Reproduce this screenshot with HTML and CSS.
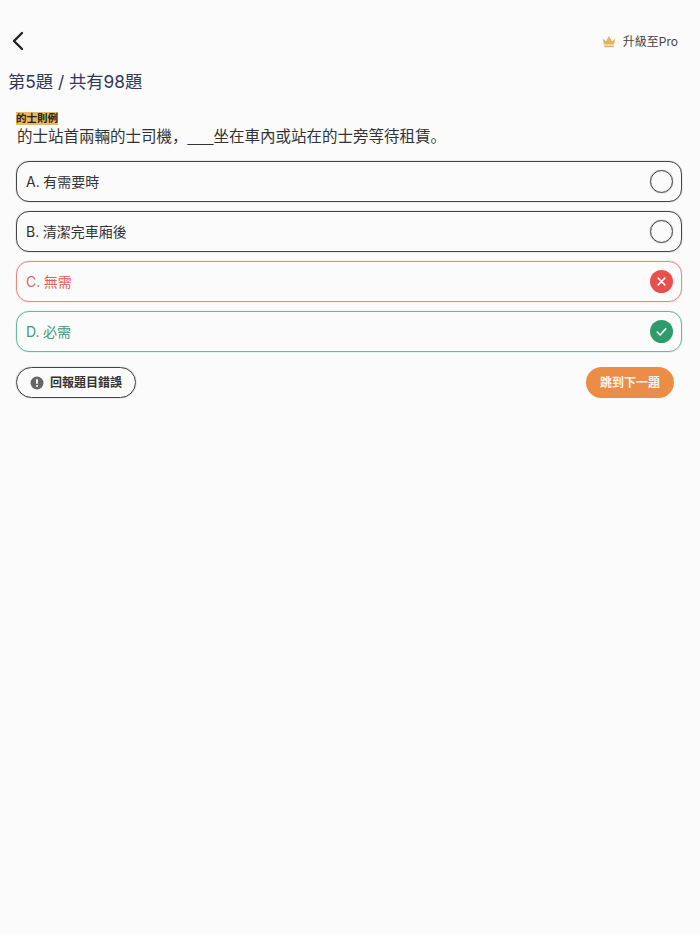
FILE: index.html
```html
<!DOCTYPE html>
<html lang="zh-Hant">
<head>
<meta charset="utf-8">
<title>Quiz</title>
<link rel="stylesheet" href="styles.css">
</head>
<body>
<header class="topbar">
  <svg class="back" width="24" height="24" viewBox="0 0 24 24"><path d="M16 4 L8 12 L16 20" fill="none" stroke="#222" stroke-width="2.4" stroke-linecap="round" stroke-linejoin="round"/></svg>
  <div class="pro">
    <svg class="crown" width="14" height="13" viewBox="0 0 14 13"><path d="M0.6 3.5 L4 6.2 L7 1 L10 6.2 L13.4 3.5 L12 9.6 H2 Z M2.2 10.6 H11.8 V12.2 H2.2 Z" fill="#e4b263"/></svg>
    <span>升級至Pro</span>
  </div>
</header>
<h1 class="progress">第5題 / 共有98題</h1>
<main class="question">
  <div class="tagline"><span class="tag">的士則例</span></div>
  <p class="stem">的士站首兩輛的士司機<span class="punct" lang="zh-Hans">，</span><span class="blank">___</span>坐在車內或站在的士旁等待租賃<span class="punct" lang="zh-Hans">。</span></p>
  <ul class="options">
    <li class="option"><span class="label">A. 有需要時</span><span class="mark"></span></li>
    <li class="option"><span class="label">B. 清潔完車廂後</span><span class="mark"></span></li>
    <li class="option wrong"><span class="label">C. 無需</span>
      <svg class="icon" width="23" height="23" viewBox="0 0 24 24"><circle cx="12" cy="12" r="12" fill="#e8504c"/><path d="M8.5 8.5 L15.5 15.5 M15.5 8.5 L8.5 15.5" stroke="#fff" stroke-width="1.6" stroke-linecap="round"/></svg></li>
    <li class="option right"><span class="label">D. 必需</span>
      <svg class="icon" width="23" height="23" viewBox="0 0 24 24"><circle cx="12" cy="12" r="12" fill="#2e9b6c"/><path d="M7.5 12.5 L10.6 15.6 L16.5 9" fill="none" stroke="#fff" stroke-width="1.6" stroke-linecap="round" stroke-linejoin="round"/></svg></li>
  </ul>
  <div class="actions">
    <button class="report">
      <svg width="14" height="14" viewBox="0 0 14 14"><circle cx="7" cy="7" r="6.5" fill="#666"/><rect x="6.1" y="3" width="1.8" height="5" rx="0.8" fill="#fff"/><circle cx="7" cy="10" r="1" fill="#fff"/></svg>
      <span class="label">回報題目錯誤</span>
    </button>
    <button class="next"><span class="label">跳到下一題</span></button>
  </div>
</main>
</body>
</html>
```
FILE: styles.css
```css
* { box-sizing: border-box; }
html, body { margin: 0; padding: 0; }
body {
  background: #fbfbfb;
  color: #222;
  font-family: Inter, "Noto Sans CJK TC", sans-serif;
  height: 934px;
  overflow: hidden;
}
.topbar {
  display: flex;
  justify-content: space-between;
  align-items: center;
  height: 24px;
  margin-top: 29px;
  padding: 0 22px 0 6px;
}
.pro { display: flex; align-items: center; gap: 7px; font-size: 12px; color: #444; padding-bottom: 2px; }
.crown { display: block; margin-top: 2px; }
.progress {
  margin: 17px 0 0 8px;
  font-size: 17.3px;
  font-weight: 400;
  line-height: 24px;
  color: #33385a;
}
.question { padding: 0 18px 0 16px; }
.tagline { margin-top: 18px; height: 13px; display: flex; }
.tag {
  background: #e9b95f;
  color: #222;
  font-size: 10.5px;
  font-weight: 700;
  line-height: 13px;
}
.stem { margin: 0; height: 23px; padding-left: 1px; font-size: 15.5px; line-height: 21px; color: #333; }
.punct { font-family: "Noto Sans CJK SC", sans-serif; }
.blank { font-family: "Liberation Sans", sans-serif; }
.options { list-style: none; margin: 13px 0 0; padding: 0; display: flex; flex-direction: column; gap: 9px; }
.option {
  height: 41px;
  border: 1px solid #444;
  box-shadow: 0 0 1px rgba(0, 0, 0, 0.6);
  border-radius: 13px;
  display: flex;
  justify-content: space-between;
  align-items: center;
  padding: 0 8px 0 9px;
  font-size: 14px;
  word-spacing: -0.5px;
  color: #333;
}
.label { margin-top: -2px; }
.mark { width: 23px; height: 23px; border: 1px solid #444; box-shadow: 0 0 1px rgba(0, 0, 0, 0.6), inset 0 0 1px rgba(0, 0, 0, 0.4); border-radius: 50%; }
.icon { display: block; }
.wrong { border-color: #e08b88; box-shadow: 0 0 1px #e08b88; color: #e0625e; }
.right { border-color: #6cb79a; box-shadow: 0 0 1px #6cb79a; color: #3d9c77; }
.actions { display: flex; justify-content: space-between; align-items: center; margin-top: 15px; padding-right: 8px; }
button { font-family: inherit; font-weight: 700; font-size: 12px; height: 31px; border-radius: 16px; display: flex; align-items: center; }
.report { width: 120px; background: transparent; border: 1px solid #444; box-shadow: 0 0 1px rgba(0, 0, 0, 0.6); color: #333; padding: 0 0 0 13px; gap: 6px; }
.next { width: 88px; background: #ec8d47; border: 0; color: #fdf3e8; justify-content: center; padding: 0; }
```
